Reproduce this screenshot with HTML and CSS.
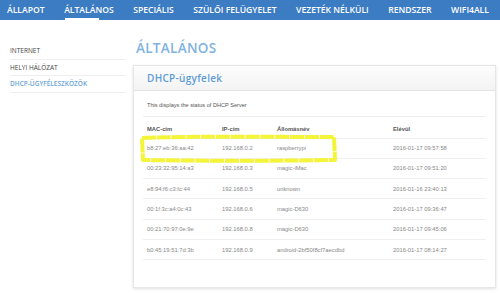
FILE: index.html
```html
<!DOCTYPE html>
<html lang="hu">
<head>
    <meta charset="UTF-8">
    <title>Általános - DHCP-ügyfelek</title>
    <link rel="stylesheet" href="styles.css">
</head>
<body>

    <!-- Top menu -->
    <nav class="topnav">
        <a href="#">ÁLLAPOT</a>
        <a href="#" class="active">ÁLTALÁNOS</a>
        <a href="#">SPECIÁLIS</a>
        <a href="#">SZÜLŐI FELÜGYELET</a>
        <a href="#">VEZETÉK NÉLKÜLI</a>
        <a href="#">RENDSZER</a>
        <a href="#">WIFI4ALL</a>
    </nav>

    <div class="layout">
        <!-- Side menu -->
        <ul class="sidenav">
            <li><a href="#">INTERNET</a></li>
            <li><a href="#">HELYI HÁLÓZAT</a></li>
            <li><a href="#" class="current">DHCP-ÜGYFÉLESZKÖZÖK</a></li>
        </ul>

        <main class="content">
            <h1>ÁLTALÁNOS</h1>

            <div class="panel">
                <div class="panel-head">DHCP-ügyfelek</div>
                <div class="panel-body">
                    <p class="intro">This displays the status of DHCP Server</p>

                    <div class="table-wrap">
                        <table>
                            <thead>
                                <tr>
                                    <th class="c-mac">MAC-cím</th>
                                    <th class="c-ip">IP-cím</th>
                                    <th class="c-host">Állomásnév</th>
                                    <th>Elévül</th>
                                </tr>
                            </thead>
                            <tbody>
                                <tr><td>b8:27:eb:36:aa:42</td><td>192.168.0.2</td><td>raspberrypi</td><td>2016-01-17 09:57:58</td></tr>
                                <tr><td>00:23:32:95:14:a3</td><td>192.168.0.3</td><td>magic-iMac</td><td>2016-01-17 09:51:20</td></tr>
                                <tr><td>e8:94:f6:c3:fc:44</td><td>192.168.0.5</td><td>unknown</td><td>2016-01-16 23:40:13</td></tr>
                                <tr><td>00:1f:3c:a4:0c:43</td><td>192.168.0.6</td><td>magic-D630</td><td>2016-01-17 09:36:47</td></tr>
                                <tr><td>00:21:70:97:0e:9e</td><td>192.168.0.8</td><td>magic-D630</td><td>2016-01-17 09:45:06</td></tr>
                                <tr><td>b0:45:19:51:7d:3b</td><td>192.168.0.9</td><td>android-2bf50f8cf7aecdbd</td><td>2016-01-17 08:14:27</td></tr>
                            </tbody>
                        </table>

                        <!-- hand-drawn marker around the first row -->
                        <svg class="marker" width="204" height="30" viewBox="0 0 204 30">
                            <path d="M3 4 C 60 2, 130 3, 195 3 L 196 26 C 130 27, 60 27, 4 26 Z"
                                  fill="none" stroke="#f4f43a" stroke-width="4"
                                  stroke-dasharray="14 0.8" stroke-linejoin="round"/>
                        </svg>
                    </div>
                </div>
            </div>
        </main>
    </div>

</body>
</html>
```

FILE: styles.css
```css
/* Base Reset */
* {
    margin: 0;
    padding: 0;
    box-sizing: border-box;
}

body {
    font-family: 'Liberation Sans', Arial, sans-serif;
    background: #fff;
    width: 500px;
    height: 293px;
    overflow: hidden;
}

a {
    text-decoration: none;
}

/* Top menu */
.topnav {
    height: 20px;
    background: #3c7cc3;
    display: flex;
    align-items: center;
    justify-content: space-between;
    padding: 0 11px 0 7px;
}

.topnav a {
    position: relative;
    color: #fff;
    font-family: 'Open Sans', sans-serif;
    font-weight: 600;
    font-size: 8.6px;
    line-height: 20px;
    white-space: nowrap;
}

.topnav a.active::after {
    content: "";
    position: absolute;
    left: 1px;
    bottom: 0;
    width: 34px;
    height: 2px;
    background: #fff;
}

/* Page body */
.layout {
    display: flex;
}

.sidenav {
    list-style: none;
    width: 116px;
    margin: 23px 0 0 10px;
}

.sidenav li {
    border-bottom: 1px solid #efefef;
    height: 16.5px;
    display: flex;
    align-items: center;
}

.sidenav a {
    font-family: 'Open Sans', sans-serif;
    font-size: 6.5px;
    color: #444;
}

.sidenav a.current {
    color: #6aa4d8;
    font-weight: 600;
}

.content {
    flex: 1;
    margin-left: 7px;
    margin-right: 4px;
}

h1 {
    font-family: 'Open Sans', sans-serif;
    font-weight: 600;
    font-size: 13.5px;
    color: #7fb2df;
    margin: 20px 0 0 3px;
    line-height: 17px;
    letter-spacing: 0.3px;
}

.panel {
    margin-top: 8px;
    border: 1px solid #e6e6e6;
    box-shadow: 0 1px 3px rgba(0, 0, 0, 0.12);
    height: 223px;
}

.panel-head {
    height: 25px;
    background: linear-gradient(#fdfdfd, #f3f3f3);
    border-bottom: 1px solid #e4e4e4;
    font-family: 'Open Sans', sans-serif;
    font-weight: 600;
    font-size: 10px;
    color: #5d9cd4;
    padding-left: 13px;
    line-height: 24px;
    letter-spacing: 0.3px;
}

.panel-body {
    padding: 0 9px 0 9px;
}

.intro {
    font-size: 5.6px;
    color: #555;
    padding: 11px 0 0 4px;
    height: 26px;
    border-bottom: 1px solid #eee;
}

.table-wrap {
    position: relative;
}

table {
    width: 100%;
    border-collapse: collapse;
    font-size: 5.8px;
    color: #888;
}

th {
    text-align: left;
    font-weight: bold;
    color: #555;
    height: 21px;
    padding: 4px 0 0 4px;
    border-bottom: 1px solid #eee;
}

td {
    height: 20.3px;
    padding-left: 4px;
    border-bottom: 1px solid #f0f0f0;
}

.c-mac {
    width: 75px;
}

.c-ip {
    width: 55px;
}

.c-host {
    width: 116px;
}

.marker {
    position: absolute;
    left: -4px;
    top: 17px;
}
```
